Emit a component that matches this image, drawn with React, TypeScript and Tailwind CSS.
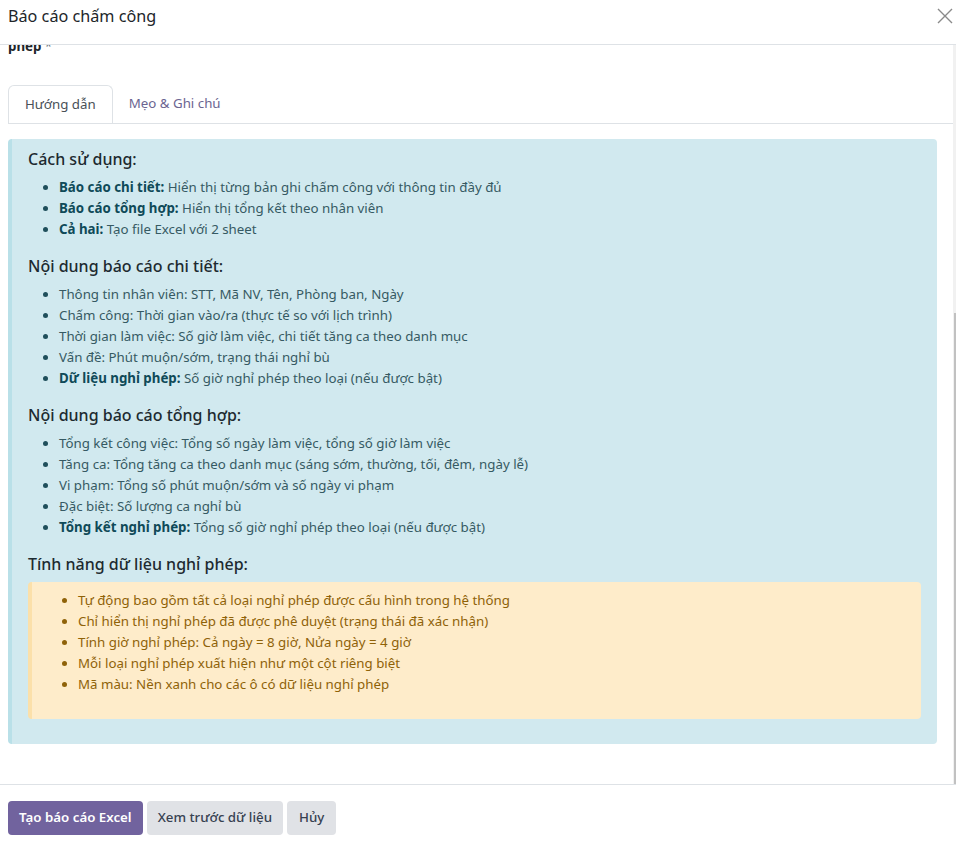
import React from "react";

const USAGE = [
  { b: "Báo cáo chi tiết:", t: " Hiển thị từng bản ghi chấm công với thông tin đầy đủ" },
  { b: "Báo cáo tổng hợp:", t: " Hiển thị tổng kết theo nhân viên" },
  { b: "Cả hai:", t: " Tạo file Excel với 2 sheet" },
];

const DETAIL = [
  { t: "Thông tin nhân viên: STT, Mã NV, Tên, Phòng ban, Ngày" },
  { t: "Chấm công: Thời gian vào/ra (thực tế so với lịch trình)" },
  { t: "Thời gian làm việc: Số giờ làm việc, chi tiết tăng ca theo danh mục" },
  { t: "Vấn đề: Phút muộn/sớm, trạng thái nghỉ bù" },
  { b: "Dữ liệu nghỉ phép:", t: " Số giờ nghỉ phép theo loại (nếu được bật)" },
];

const SUMMARY = [
  { t: "Tổng kết công việc: Tổng số ngày làm việc, tổng số giờ làm việc" },
  { t: "Tăng ca: Tổng tăng ca theo danh mục (sáng sớm, thường, tối, đêm, ngày lễ)" },
  { t: "Vi phạm: Tổng số phút muộn/sớm và số ngày vi phạm" },
  { t: "Đặc biệt: Số lượng ca nghỉ bù" },
  { b: "Tổng kết nghỉ phép:", t: " Tổng số giờ nghỉ phép theo loại (nếu được bật)" },
];

const LEAVE = [
  "Tự động bao gồm tất cả loại nghỉ phép được cấu hình trong hệ thống",
  "Chỉ hiển thị nghỉ phép đã được phê duyệt (trạng thái đã xác nhận)",
  "Tính giờ nghỉ phép: Cả ngày = 8 giờ, Nửa ngày = 4 giờ",
  "Mỗi loại nghỉ phép xuất hiện như một cột riêng biệt",
  "Mã màu: Nền xanh cho các ô có dữ liệu nghỉ phép",
];

type Item = { b?: string; t: string };

const Heading = ({ children }: { children: React.ReactNode }) => (
  <h5 className="text-[16px] leading-[20px] font-medium text-[#1d2a30] mb-2">{children}</h5>
);

const InfoList = ({ items }: { items: Item[] }) => (
  <ul className="list-disc pl-[31px] mb-4 text-[#365a63] marker:text-[#1f4f5b]">
    {items.map((it) => (
      <li key={it.t} className="leading-[21px]">
        {it.b && <strong className="font-bold text-[#0f4a58]">{it.b}</strong>}
        {it.t}
      </li>
    ))}
  </ul>
);

export default function App() {
  return (
    <div
      className="w-[956px] h-[845px] bg-white overflow-hidden flex flex-col text-[13.3px] text-[#212529]"
      style={{ fontFamily: '"Noto Sans", "Open Sans", sans-serif' }}
    >
      {/* Header */}
      <div className="h-[45px] shrink-0 flex items-start justify-between pl-2 pr-[3px] pt-[4px] border-b border-[#dee2e6]">
        <h4 className="text-[16.2px] leading-[24px] font-normal text-[#212529]">Báo cáo chấm công</h4>
        <svg width="16" height="16" viewBox="0 0 16 16" className="mt-[4px]">
          <path d="M1 1 L15 15 M15 1 L1 15" stroke="#8a8a8a" strokeWidth="1.4" fill="none" />
        </svg>
      </div>

      {/* Body */}
      <div className="relative h-[739px] shrink-0 overflow-hidden">
        <div className="-mt-[9px] pl-2 pr-[19px]">
          <div className="leading-[21px] font-bold text-[#212529]">
            phép <span className="font-normal text-[#6c757d]">*</span>
          </div>

          {/* Tabs */}
          <div className="mt-[28px] flex border-b border-[#dee2e6] -mr-[16px]">
            <div className="h-[38px] px-[16px] flex items-center border border-b-0 border-[#dee2e6] rounded-t-md bg-white text-[#495057] -mb-px">
              Hướng dẫn
            </div>
            <div className="h-[38px] px-[16px] flex items-center text-[#6b6591]">Mẹo &amp; Ghi chú</div>
          </div>

          {/* Info alert */}
          <div className="mt-[15px] bg-[#d1e9ef] border-l-4 border-[#b9e0e8] rounded-[4px] pt-[10px] pb-[9px] pl-4 pr-4">
            <Heading>Cách sử dụng:</Heading>
            <InfoList items={USAGE} />
            <Heading>Nội dung báo cáo chi tiết:</Heading>
            <InfoList items={DETAIL} />
            <Heading>Nội dung báo cáo tổng hợp:</Heading>
            <InfoList items={SUMMARY} />
            <Heading>Tính năng dữ liệu nghỉ phép:</Heading>

            <div className="bg-[#feecca] border-l-4 border-[#fbe0aa] rounded-[4px] pt-2 pb-2 pl-4 pr-4 mb-4">
              <ul className="list-disc pl-[30px] mb-4 text-[#8f6208]">
                {LEAVE.map((t) => (
                  <li key={t} className="leading-[21px]">
                    {t}
                  </li>
                ))}
              </ul>
            </div>
          </div>
        </div>

        {/* Scrollbar */}
        <div className="absolute right-0 top-0 bottom-0 w-[3px] bg-[#f1f1f1]">
          <div className="absolute left-[1px] right-0 top-[268px] bottom-0 bg-[#c1c1c1]" />
        </div>
      </div>

      {/* Footer */}
      <div className="border-t border-[#dee2e6] pt-4 px-2 flex gap-1">
        <button className="h-[34px] px-[11px] rounded-[4px] bg-[#71639e] text-white font-semibold">
          Tạo báo cáo Excel
        </button>
        <button className="h-[34px] px-[11px] rounded-[4px] bg-[#e0e2e6] text-[#374151] font-medium">
          Xem trước dữ liệu
        </button>
        <button className="h-[34px] px-[12px] rounded-[4px] bg-[#e0e2e6] text-[#374151] font-medium">
          Hủy
        </button>
      </div>
    </div>
  );
}
